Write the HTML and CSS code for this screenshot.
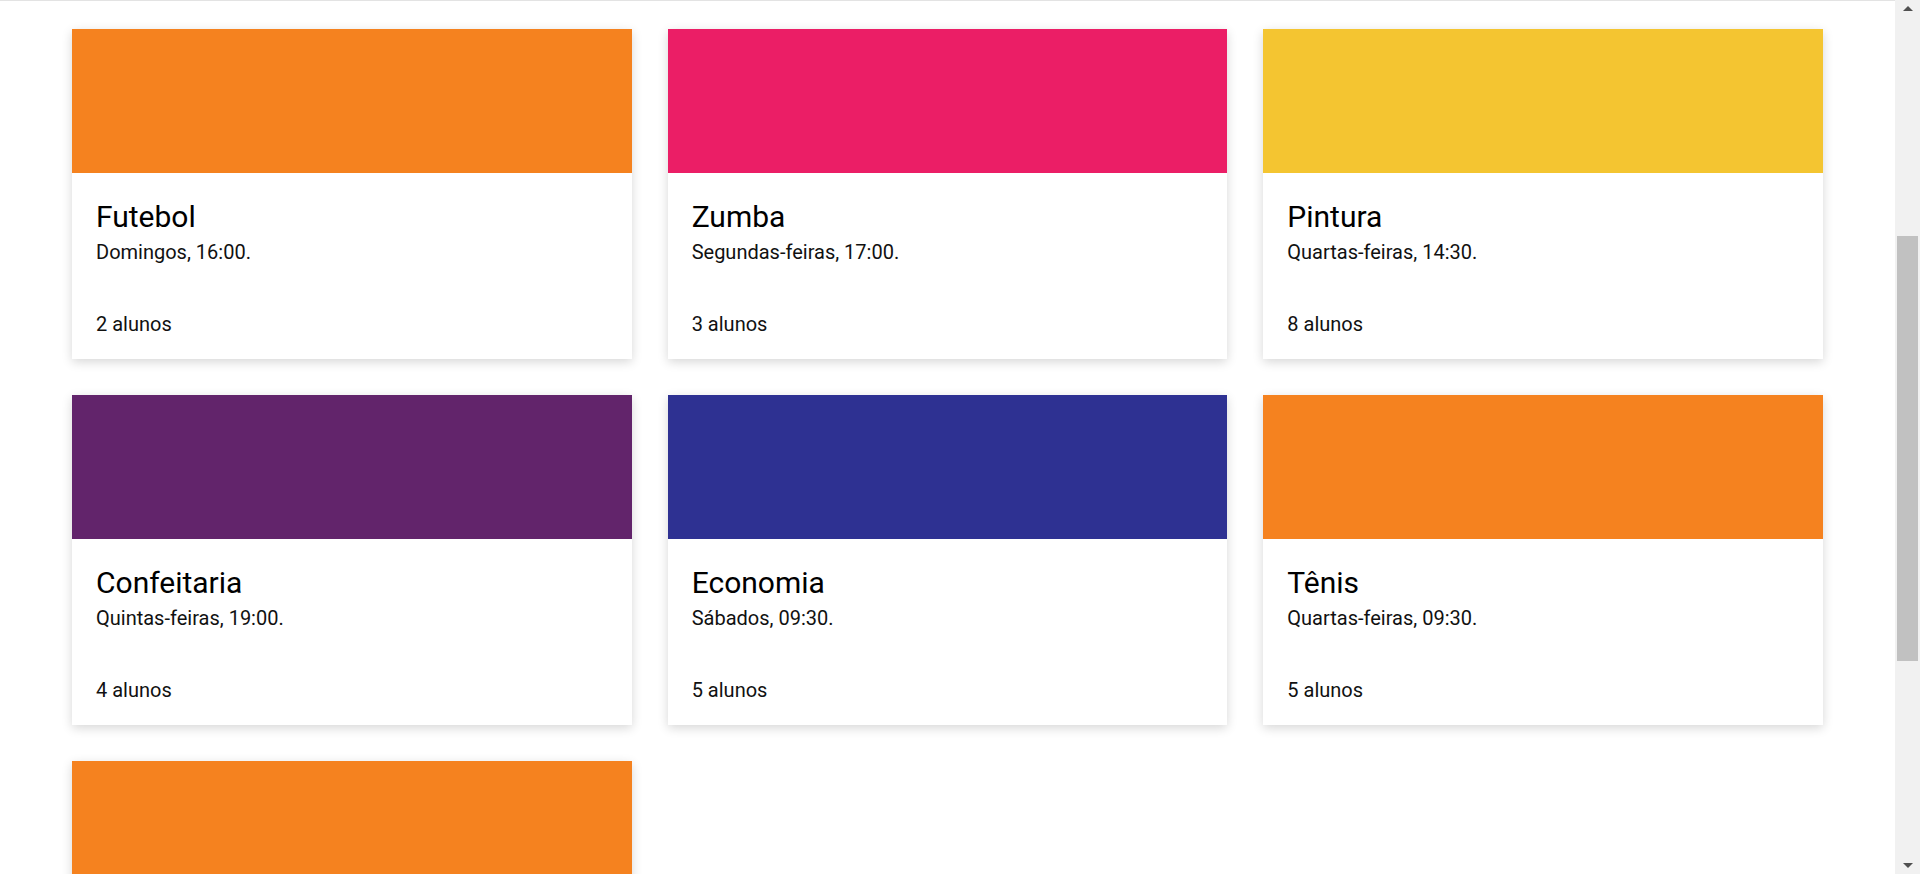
FILE: index.html
```html
<!DOCTYPE html>
<html lang="pt-BR">
<head>
<meta charset="utf-8">
<title>Turmas</title>
<link rel="stylesheet" href="styles.css">
</head>
<body>
<div class="window">
  <main class="page">
    <section class="grid">
      <article class="card">
        <div class="cover orange"></div>
        <div class="body">
          <h2 class="title">Futebol</h2>
          <p class="when">Domingos, 16:00.</p>
          <p class="count">2 alunos</p>
        </div>
      </article>
      <article class="card">
        <div class="cover pink"></div>
        <div class="body">
          <h2 class="title">Zumba</h2>
          <p class="when">Segundas-feiras, 17:00.</p>
          <p class="count">3 alunos</p>
        </div>
      </article>
      <article class="card">
        <div class="cover yellow"></div>
        <div class="body">
          <h2 class="title">Pintura</h2>
          <p class="when">Quartas-feiras, 14:30.</p>
          <p class="count">8 alunos</p>
        </div>
      </article>
      <article class="card">
        <div class="cover purple"></div>
        <div class="body">
          <h2 class="title">Confeitaria</h2>
          <p class="when">Quintas-feiras, 19:00.</p>
          <p class="count">4 alunos</p>
        </div>
      </article>
      <article class="card">
        <div class="cover navy"></div>
        <div class="body">
          <h2 class="title">Economia</h2>
          <p class="when">Sábados, 09:30.</p>
          <p class="count">5 alunos</p>
        </div>
      </article>
      <article class="card">
        <div class="cover orange"></div>
        <div class="body">
          <h2 class="title">Tênis</h2>
          <p class="when">Quartas-feiras, 09:30.</p>
          <p class="count">5 alunos</p>
        </div>
      </article>
      <article class="card last">
        <div class="cover orange"></div>
      </article>
    </section>
  </main>
  <div class="scrollbar" aria-hidden="true">
    <div class="arrow up"></div>
    <div class="track"><div class="thumb"></div></div>
    <div class="arrow down"></div>
  </div>
</div>
</body>
</html>
```

FILE: styles.css
```css
html, body {
  margin: 0;
  padding: 0;
  height: 100%;
  overflow: hidden;
  background: #ffffff;
}

body {
  font-family: Roboto, "Liberation Sans", Arial, sans-serif;
  color: #000;
}

.window {
  display: flex;
  height: 100vh;
}

.page {
  flex: 1;
  overflow: hidden;
  border-top: 1px solid #e3e3e3;
  padding: 28px 72px 40px;
}

.grid {
  display: grid;
  grid-template-columns: repeat(3, 1fr);
  column-gap: 36px;
  row-gap: 36px;
}

.card {
  background: #fff;
  height: 330px;
  display: flex;
  flex-direction: column;
  box-shadow: 0 3px 10px rgba(0, 0, 0, 0.16);
}

.cover {
  height: 144px;
  flex: none;
}

.orange { background: #f5821f; }
.pink { background: #eb1e66; }
.yellow { background: #f4c531; }
.purple { background: #62246b; }
.navy { background: #2e3192; }

.body {
  flex: 1;
  display: flex;
  flex-direction: column;
  padding: 26px 24px 23px;
}

.title {
  margin: 0;
  font-size: 30px;
  font-weight: 400;
  line-height: 36px;
  color: #000;
}

.when {
  margin: 5px 0 0;
  font-size: 20px;
  line-height: 24px;
  color: #111;
}

.count {
  margin: auto 0 0;
  font-size: 20px;
  line-height: 24px;
  color: #111;
}

.scrollbar {
  width: 25px;
  flex: none;
  background: #f1f1f1;
  display: flex;
  flex-direction: column;
}

.arrow {
  height: 17px;
  flex: none;
  display: flex;
  align-items: center;
  justify-content: center;
}

.arrow::before {
  content: "";
  width: 0;
  height: 0;
  border-left: 5px solid transparent;
  border-right: 5px solid transparent;
}

.arrow.up::before {
  border-bottom: 5px solid #505050;
}

.arrow.down::before {
  border-top: 5px solid #505050;
}

.track {
  flex: 1;
  padding-top: 219px;
}

.thumb {
  margin: 0 2px;
  height: 425px;
  background: #c1c1c1;
}
```
